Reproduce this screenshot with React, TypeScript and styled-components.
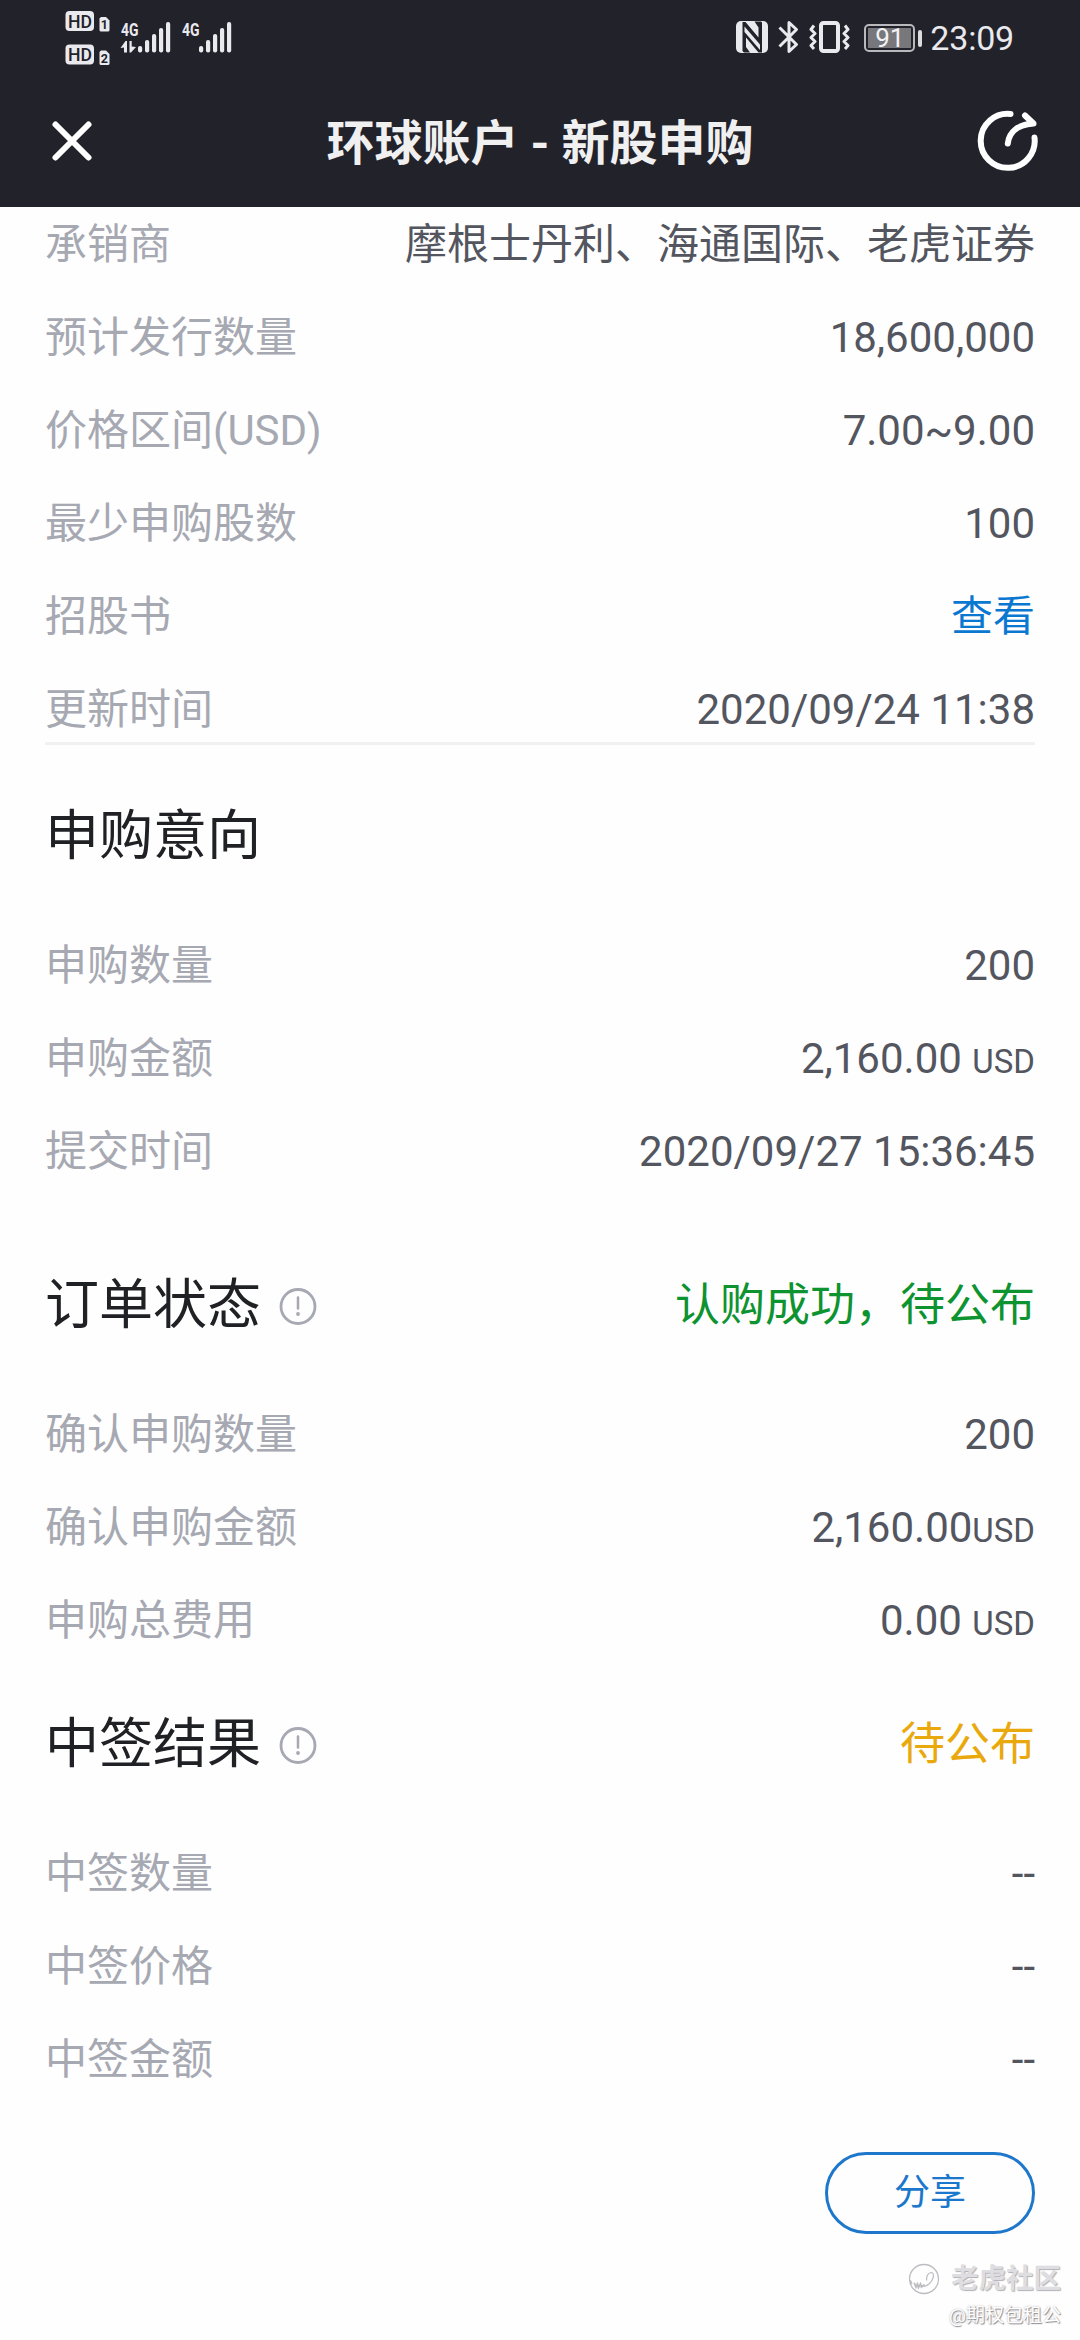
import React from 'react';
import styled, { createGlobalStyle } from 'styled-components';

const GlobalStyle = createGlobalStyle`
  * { box-sizing: border-box; }
  body {
    margin: 0;
    background: #fefefe;
    font-family: Roboto, "Noto Sans CJK SC", sans-serif;
  }
`;

const Screen = styled.div`
  position: relative;
  display: flex;
  flex-direction: column;
  width: 1080px;
  height: 2340px;
  overflow: hidden;
  background: #fefefe;
`;

const Top = styled.header`
  display: flex;
  flex-direction: column;
  flex: none;
  height: 207px;
  background: #22222b;
  color: #e9e9ee;
`;

const StatusBar = styled.div`
  display: flex;
  justify-content: space-between;
  height: 76px;
  padding: 0 66px 0 65px;
`;

const StatusGroup = styled.div`
  display: flex;
  height: 76px;
`;

const Battery = styled.div`
  display: flex;
  align-items: center;
  margin: 0 8px 0 14px;
  gap: 3px;
`;

const BatteryBody = styled.div`
  width: 51px;
  height: 28px;
  padding: 2px;
  border: 2px solid #b9b9bd;
  border-radius: 5px;
`;

const BatteryLevel = styled.div`
  width: 43px;
  height: 20px;
  background: #77777c;
  color: #f2f2f4;
  font-size: 26px;
  line-height: 21px;
  text-align: center;
`;

const BatteryTip = styled.div`
  width: 4px;
  height: 17px;
  border-radius: 2px;
  background: #dcdce0;
`;

const Clock = styled.div`
  font-size: 34px;
  line-height: 76px;
  letter-spacing: -0.2px;
`;

const NavBar = styled.div`
  display: flex;
  align-items: center;
  justify-content: space-between;
  height: 131px;
  padding: 0 32px 3px;
`;

const NavTitle = styled.h1`
  margin: 0;
  padding-top: 8px;
  color: #f0f0f1;
  font-size: 48px;
  font-weight: 700;
  line-height: 120px;
`;

const NavIcon = styled.button`
  display: flex;
  align-items: center;
  justify-content: center;
  width: 80px;
  height: 80px;
  padding: 0;
  border: 0;
  background: none;
`;

const Content = styled.main`
  display: flex;
  flex-direction: column;
  padding: 9px 45px 0;
`;

const Rows = styled.div<{ $divided?: boolean }>`
  display: flex;
  flex-direction: column;
  gap: 36px;
  padding-bottom: ${(p) => (p.$divided ? '4px' : '0')};
  border-bottom: ${(p) => (p.$divided ? '3px solid #f1f1f1' : '0')};
`;

const Row = styled.div`
  display: flex;
  justify-content: space-between;
  height: 57px;
  font-size: 42px;
  line-height: 57px;
  white-space: nowrap;
`;

const Label = styled.span`
  color: #a6a8b2;
`;

const Value = styled.span<{ $link?: boolean }>`
  color: ${(p) => (p.$link ? '#0a78d1' : '#53555f')};
`;

const Unit = styled.span<{ $spaced?: boolean }>`
  margin-left: ${(p) => (p.$spaced ? '10.5px' : '0')};
  font-size: 33px;
`;

const Heading = styled.div<{ $before: number }>`
  display: flex;
  align-items: center;
  justify-content: space-between;
  height: 74px;
  margin: ${(p) => p.$before}px 0 63px;
`;

const HeadingTitle = styled.h2`
  display: flex;
  align-items: center;
  gap: 18px;
  margin: 0;
  color: #202124;
  font-size: 54px;
  font-weight: 400;
  line-height: 74px;
`;

const Status = styled.span<{ $color: string }>`
  color: ${(p) => p.$color};
  font-size: 45px;
  line-height: 74px;
`;

const ShareButton = styled.button`
  align-self: flex-end;
  width: 210px;
  height: 82px;
  margin-top: 64px;
  padding: 0;
  border: 3px solid #1f77cc;
  border-radius: 41px;
  background: #fefefe;
  color: #1b77cc;
  font: 400 36px/76px Roboto, "Noto Sans CJK SC", sans-serif;
`;

const Watermark = styled.div`
  position: absolute;
  right: 19px;
  bottom: 11px;
  display: flex;
  flex-direction: column;
  align-items: flex-end;
  color: #fefefe;
  text-shadow: 1px 1px 1px #8d8d93, 0 0 2px #b5b5ba;
`;

const WatermarkBrand = styled.div`
  display: flex;
  align-items: center;
  gap: 11px;
  height: 34px;
  font-size: 27.5px;
  font-weight: 700;
  line-height: 34px;
  color: #dedee2;
  text-shadow: 1px 1px 1px #b0b0b6;
`;

const WatermarkUser = styled.div`
  margin-top: 7px;
  font-size: 19px;
  line-height: 26px;
`;

function SignalIcons() {
  const bars = [46, 40, 34, 28, 22];
  return (
    <svg width="170" height="76" viewBox="65 0 170 76" fill="#e9e9ee" fontFamily="Roboto, sans-serif">
      {[11, 44.5].map((y, i) => (
        <g key={y}>
          <rect x="65.500" y={y} width="28.500" height="20" rx="4" />
          <text x="68" y={y + 16.6} fontSize="19" fontWeight="500" textLength="24" lengthAdjust="spacingAndGlyphs" fill="#22222b">HD</text>
          <path d={`M101 ${y + 6}h5l3.500 3.500v9.500a1.500 1.500 0 0 1-1.500 1.500h-7a1.500 1.500 0 0 1-1.500-1.500v-11.500z`} />
          <text x="104.300" y={y + 18.3} fontSize="12.500" fontWeight="700" textAnchor="middle" fill="#22222b">{i + 1}</text>
        </g>
      ))}
      {[0, 61].map((dx) => (
        <g key={dx}>
          <text x={121 + dx} y="36" fontSize="19" fontWeight="700" textLength="17.500" lengthAdjust="spacingAndGlyphs">4G</text>
          {bars.map((top, i) => (
            <rect key={top} x={138 + dx + i * 7} y={top} width="4.200" height={52.5 - top} rx="2" />
          ))}
        </g>
      ))}
      <path d="M120.500 48l5-7h1.500v11.500h-3v-5z M129.500 41h2.200v5.500l4.300.5-5 5.500h-1.500z" />
    </svg>
  );
}

function DeviceIcons() {
  return (
    <svg width="114" height="76" viewBox="736 0 114 76" fill="none" stroke="#e9e9ee">
      <rect x="736" y="21" width="32" height="32" rx="5" fill="#e9e9ee" stroke="none" />
      <path d="M742.500 22h3l13 15.500v-10l-4-6h6.500l1 1v30h-3.500l-12.500-15v9.500l4 5.500h-6l-1.500-1.500z" fill="#22222b" stroke="none" />
      <path d="M744.500 26.500l15.500 18v5.500l-15.500-18z" fill="#e9e9ee" stroke="none" />
      <path d="M779.500 27.500l17 17-7.500 7v-29l7.500 7-17 17" strokeWidth="3" strokeLinejoin="round" />
      <rect x="821" y="23" width="17" height="28" rx="2.500" strokeWidth="4" />
      <path d="M814 25.500l-3 4 4 4-4 4 4 4-4 4 3 3.500 M845 25.500l3 4-4 4 4 4-4 4 4 4-3 3.500" strokeWidth="3" strokeLinejoin="round" />
    </svg>
  );
}

function CloseIcon() {
  return (
    <svg width="60" height="60" viewBox="0 0 60 60" stroke="#fff" strokeWidth="6" strokeLinecap="round">
      <path d="M13.500 14.500l33 33M46.500 14.500l-33 33" />
    </svg>
  );
}

function ShareIcon() {
  return (
    <svg width="80" height="80" viewBox="0 0 80 80" fill="none" stroke="#fff" strokeWidth="6" strokeLinecap="round" strokeLinejoin="round">
      <path d="M42.500 14A27 27 0 1 0 66.500 37.500" />
      <path d="M39.800 43.500C41 32 50 24.500 65.500 23.500L57 15.500" />
    </svg>
  );
}

function InfoIcon() {
  return (
    <svg width="38" height="38" viewBox="0 0 38 38" fill="none" stroke="#a6a8b2" strokeWidth="2.800">
      <circle cx="19" cy="19.500" r="17" />
      <path d="M19 10.500v11" strokeWidth="2.500" strokeLinecap="round" />
      <circle cx="19" cy="27" r="1.900" fill="#a6a8b2" stroke="none" />
    </svg>
  );
}

function TigerPaw() {
  return (
    <svg width="32" height="32" viewBox="0 0 32 32" fill="none" stroke="#bcbcc1" strokeLinecap="round">
      <circle cx="16" cy="16" r="14.500" strokeWidth="1.300" />
      <path d="M18.500 17c0-4 2-7 4.500-7.500 2.500 0 3 3 2 5.500-1.500 4-5 7.500-9 8.500" strokeWidth="1.200" />
      <path d="M2.500 18l1 2.500 M6.500 20.500l1.500 3.500 1.500-3 1 3.500 2-3.500 1 3 2.500-2" strokeWidth="1.800" />
    </svg>
  );
}

interface Item {
  label: string;
  value: string;
  unit?: string;
  spaced?: boolean;
  link?: boolean;
}

const offering: Item[] = [
  { label: '承销商', value: '摩根士丹利、海通国际、老虎证券' },
  { label: '预计发行数量', value: '18,600,000' },
  { label: '价格区间(USD)', value: '7.00~9.00' },
  { label: '最少申购股数', value: '100' },
  { label: '招股书', value: '查看', link: true },
  { label: '更新时间', value: '2020/09/24 11:38' },
];

const intent: Item[] = [
  { label: '申购数量', value: '200' },
  { label: '申购金额', value: '2,160.00', unit: 'USD', spaced: true },
  { label: '提交时间', value: '2020/09/27 15:36:45' },
];

const order: Item[] = [
  { label: '确认申购数量', value: '200' },
  { label: '确认申购金额', value: '2,160.00', unit: 'USD' },
  { label: '申购总费用', value: '0.00', unit: 'USD', spaced: true },
];

const result: Item[] = [
  { label: '中签数量', value: '--' },
  { label: '中签价格', value: '--' },
  { label: '中签金额', value: '--' },
];

function DetailRows({ items, divided }: { items: Item[]; divided?: boolean }) {
  return (
    <Rows $divided={divided}>
      {items.map((item) => (
        <Row key={item.label}>
          <Label>{item.label}</Label>
          <Value $link={item.link}>
            {item.value}
            {item.unit && <Unit $spaced={item.spaced}>{item.unit}</Unit>}
          </Value>
        </Row>
      ))}
    </Rows>
  );
}

export default function App() {
  return (
    <Screen>
      <GlobalStyle />
      <Top>
        <StatusBar>
          <StatusGroup>
            <SignalIcons />
          </StatusGroup>
          <StatusGroup>
            <DeviceIcons />
            <Battery>
              <BatteryBody>
                <BatteryLevel>91</BatteryLevel>
              </BatteryBody>
              <BatteryTip />
            </Battery>
            <Clock>23:09</Clock>
          </StatusGroup>
        </StatusBar>
        <NavBar>
          <NavIcon aria-label="关闭">
            <CloseIcon />
          </NavIcon>
          <NavTitle>环球账户 - 新股申购</NavTitle>
          <NavIcon aria-label="分享">
            <ShareIcon />
          </NavIcon>
        </NavBar>
      </Top>
      <Content>
        <DetailRows items={offering} divided />
        <Heading $before={55}>
          <HeadingTitle>申购意向</HeadingTitle>
        </Heading>
        <DetailRows items={intent} />
        <Heading $before={89}>
          <HeadingTitle>
            订单状态
            <InfoIcon />
          </HeadingTitle>
          <Status $color="#0d9330">认购成功，待公布</Status>
        </Heading>
        <DetailRows items={order} />
        <Heading $before={59}>
          <HeadingTitle>
            中签结果
            <InfoIcon />
          </HeadingTitle>
          <Status $color="#e9a90c">待公布</Status>
        </Heading>
        <DetailRows items={result} />
        <ShareButton>分享</ShareButton>
      </Content>
      <Watermark>
        <WatermarkBrand>
          <TigerPaw />
          老虎社区
        </WatermarkBrand>
        <WatermarkUser>@期权包租公</WatermarkUser>
      </Watermark>
    </Screen>
  );
}
